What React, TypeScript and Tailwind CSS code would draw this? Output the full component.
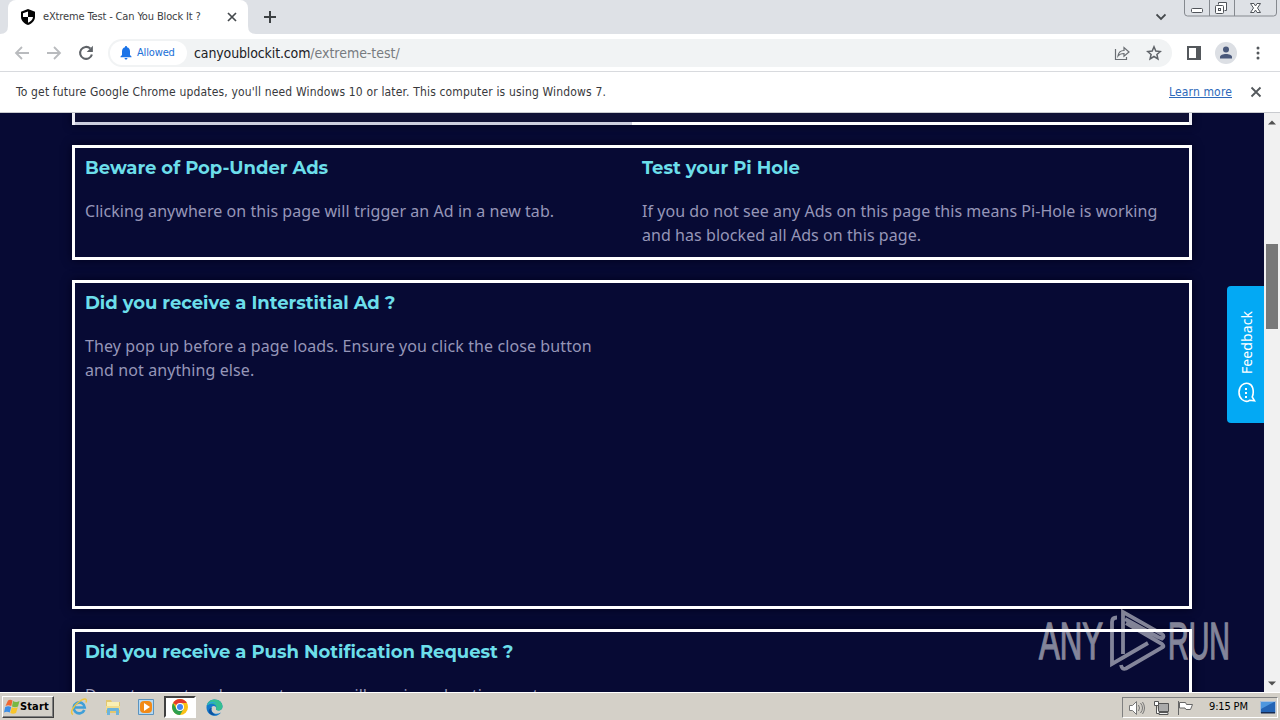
import type { ReactNode } from "react";

const UI_FONT = "font-['DejaVu_Sans_Condensed','DejaVu_Sans',sans-serif]";

function TabStrip() {
  return (
    <div className="relative flex h-[34px] shrink-0 items-start bg-[#dee1e6]">
      <svg className="self-end" width="8" height="8" viewBox="0 0 8 8" fill="#fff">
        <path d="M0 8Q8 8 8 0v8z" />
      </svg>
      <div className="relative flex h-[34px] w-[240px] items-center rounded-t-lg bg-white pl-3 pr-2.5">
        <ShieldIcon />
        <span className="ml-[7px] w-[162px] whitespace-nowrap pt-px text-[11px] tracking-[-0.14px] text-[#3c4043]">
          eXtreme Test - Can You Block It ?
        </span>
        <svg className="ml-auto" width="12" height="12" viewBox="0 0 12 12" stroke="#45494d" strokeWidth="1.7">
          <path d="M2 2l8 8M10 2l-8 8" />
        </svg>
      </div>
      <svg className="self-end" width="8" height="8" viewBox="0 0 8 8" fill="#fff">
        <path d="M0 0Q0 8 8 8H0z" />
      </svg>
      <svg className="ml-[7px] mt-2.5" width="14" height="14" viewBox="0 0 14 14" stroke="#3c4043" strokeWidth="2">
        <path d="M7 1v12M1 7h12" />
      </svg>
      <svg className="ml-auto mr-[18px] mt-[13px]" width="10" height="8" viewBox="0 0 10 8" fill="none" stroke="#45494d" strokeWidth="1.8">
        <path d="M.500 1.500L5 6l4.500-4.500" />
      </svg>
      <svg className="mr-[3px]" width="93" height="17" viewBox="0 0 93 17" fill="none" stroke="#85898f">
        <path d="M.5 0v13q0 3 3 3h86q3 0 3-3V0M25.500 0v16M50.500 0v16" />
        <g stroke="#50545a">
          <rect x="7.500" y="8.500" width="11" height="4" rx="1" fill="#fff" />
          <path d="M34.500 4.500v-2h8v8h-2" fill="#fff" />
          <rect x="31.500" y="5.500" width="8" height="8" rx="1" fill="#fff" />
          <rect x="34.500" y="8.500" width="2" height="2" />
          <path d="M66.500 3.500h3.500l1.500 2.500 1.500-2.500h3.500l-3 4.500 3 4.500h-3.500l-1.500-2.500-1.500 2.500h-3.500l3-4.500z" fill="#fff" />
        </g>
      </svg>
    </div>
  );
}

function ShieldIcon() {
  return (
    <svg width="16" height="18" viewBox="0 0 16 18">
      <path d="M8 1l7 2.700v5c0 4-3 6.800-7 8.300-4-1.500-7-4.300-7-8.300v-5z" fill="#050505" />
      <path d="M8 3.500V9H3V5.300zM8 9h5c-.3 2.800-2.400 4.600-5 5.700z" fill="#fff" />
    </svg>
  );
}

function Toolbar() {
  return (
    <div className="flex h-[38px] shrink-0 items-center border-b border-[#d8dade] bg-white pl-[14px]">
      <svg width="16" height="16" viewBox="0 0 16 16" fill="none" stroke="#b9bbbe" strokeWidth="1.800">
        <path d="M15 8H2M8 2L2 8l6 6" />
      </svg>
      <svg className="ml-4" width="16" height="16" viewBox="0 0 16 16" fill="none" stroke="#b9bbbe" strokeWidth="1.800">
        <path d="M1 8h13M8 2l6 6-6 6" />
      </svg>
      <svg className="ml-4" width="16" height="16" viewBox="0 0 16 16" fill="none" stroke="#5f6368" strokeWidth="2.100">
        <path d="M13.900 9.500A6 6 0 1 1 12.300 3.600" />
        <path d="M14.900 .7v6.200h-6.200z" fill="#5f6368" stroke="none" />
      </svg>
      <div className="ml-[14px] flex h-[28px] w-[1064px] items-center rounded-full bg-[#f1f3f4] pl-0.5">
        <div className="flex h-[24px] w-[77px] items-center rounded-full bg-white pl-2.5">
          <svg width="12" height="14" viewBox="0 0 12 14" fill="#1a73e8">
            <path d="M6 0c.8 0 1 .5 1 1.200 2 .5 3 2.200 3 4.300v3.500l1.500 1.500v.8H.500v-.8L2 9V5.500c0-2.100 1-3.800 3-4.300C5 .500 5.200 0 6 0zM4.600 12h2.800c0 2-2.800 2-2.800 0z" />
          </svg>
          <span className="ml-[5px] pt-px text-[11px] tracking-[-0.15px] text-[#2070d8]">Allowed</span>
        </div>
        <span className="ml-[7px] whitespace-nowrap pt-0.5 text-[14px] tracking-[-0.13px] text-[#202124]">
          canyoublockit.com<span className="tracking-[-0.03px] text-[#777b80]">/extreme-test/</span>
        </span>
        <svg className="ml-auto" width="16" height="16" viewBox="0 0 16 16" fill="none" stroke="#6a6e73" strokeWidth="1.200">
          <path d="M1.500 4v10.500h11V12M4 11c.5-4 3-5.500 6-5.500V2.500L15 7l-5 4.300V8.500C7.500 8.500 5.500 9 4 11z" />
        </svg>
        <svg className="ml-4 mr-2.5" width="16" height="16" viewBox="0 0 16 16" fill="none" stroke="#5f6368" strokeWidth="1.500">
          <path d="M8 1.800l1.800 4.300 4.500.4-3.400 3 1 4.400L8 11.500l-3.900 2.400 1-4.400-3.400-3 4.500-.4z" />
        </svg>
      </div>
      <svg className="ml-[15px]" width="14" height="14" viewBox="0 0 14 14">
        <rect x="1" y="1" width="12" height="12" fill="none" stroke="#54585c" strokeWidth="2" />
        <path d="M9 0h5v14H9z" fill="#54585c" />
      </svg>
      <svg className="ml-3.5" width="22" height="22" viewBox="0 0 22 22">
        <circle cx="11" cy="11" r="11" fill="#dcdfe4" />
        <circle cx="11" cy="7.500" r="3" fill="#49587a" />
        <path d="M5 16.500v-1.500c0-4 12-4 12 0v1.500z" fill="#49587a" />
      </svg>
      <svg className="ml-[19px]" width="4" height="14" viewBox="0 0 4 14" fill="#54585c">
        <circle cx="2" cy="2" r="1.500" />
        <circle cx="2" cy="7" r="1.500" />
        <circle cx="2" cy="12" r="1.500" />
      </svg>
    </div>
  );
}

function UpdateNotice() {
  return (
    <div className="flex h-[41px] shrink-0 items-center border-b border-[#c9cbcf] bg-white pl-4 pr-[18px] text-[12px]">
      <span className="whitespace-nowrap tracking-[0.16px] text-[#38393c]">
        To get future Google Chrome updates, you'll need Windows 10 or later. This computer is using Windows 7.
      </span>
      <span className="ml-auto whitespace-nowrap tracking-[0.15px] text-[#2d69ba] underline">Learn more</span>
      <svg className="ml-[18px]" width="12" height="12" viewBox="0 0 12 12" stroke="#54585c" strokeWidth="1.800">
        <path d="M1.500 1.500l9 9M10.500 1.500l-9 9" />
      </svg>
    </div>
  );
}

function Heading({ children }: { children: ReactNode }) {
  return (
    <h3 className="whitespace-nowrap font-['Montserrat','Open_Sans',sans-serif] text-[18px] font-bold leading-6 tracking-[-0.03px] text-[#6cdeea]">
      {children}
    </h3>
  );
}

function Panel({ children, size }: { children: ReactNode; size: string }) {
  return (
    <section className={`mb-5 flex shrink-0 border-[3px] border-white px-2.5 pt-2 shadow-[0_0_9px_#00001c] ${size}`}>
      {children}
    </section>
  );
}

function Copy({ children, spacing = "tracking-[0.055px]" }: { children: ReactNode; spacing?: string }) {
  return (
    <p className={`mt-[19px] whitespace-nowrap font-['Noto_Sans',sans-serif] text-[16px] leading-6 text-[#9696b8] ${spacing}`}>
      {children}
    </p>
  );
}

function PageContent() {
  return (
    <main className="relative flex h-[579px] shrink-0 overflow-hidden bg-[#070a34]">
      <div className="flex w-[1264px] flex-col px-[72px]">
        <div className="mb-5 flex h-[12px] shrink-0 border-x-[3px] border-[#eeeef5] bg-[#101136] shadow-[0_0_9px_#00001c]">
          <div className="w-[557px] border-b-[3px] border-[#cdcede]" />
          <div className="flex-1 border-b-[3px] border-white" />
        </div>
        <Panel size="h-[115px]">
          <div className="w-[557px]">
            <Heading>Beware of Pop-Under Ads</Heading>
            <Copy>Clicking anywhere on this page will trigger an Ad in a new tab.</Copy>
          </div>
          <div>
            <Heading>Test your Pi Hole</Heading>
            <Copy>
              If you do not see any Ads on this page this means Pi-Hole is working
              <br />
              and has blocked all Ads on this page.
            </Copy>
          </div>
        </Panel>
        <Panel size="h-[329px]">
          <div>
            <Heading>Did you receive a Interstitial Ad ?</Heading>
            <Copy spacing="tracking-[0.095px]">
              They pop up before a page loads. Ensure you click the close button
              <br />
              and not anything else.
            </Copy>
          </div>
        </Panel>
        <Panel size="h-[140px]">
          <div>
            <Heading>Did you receive a Push Notification Request ?</Heading>
            <Copy>Do not accept and request or you will receive advertisements</Copy>
          </div>
        </Panel>
      </div>
      <div className="flex w-4 flex-col items-center bg-[#f1f1f1]">
        <svg className="mt-[7px]" width="8" height="5" viewBox="0 0 8 5" fill="#505050"><path d="M0 4.500L4 .500l4 4z" /></svg>
        <div className="mt-[119px] h-[85px] w-[12px] bg-[#787878]" />
        <svg className="mb-[6px] mt-auto" width="8" height="5" viewBox="0 0 8 5" fill="#505050"><path d="M0 .500l4 4 4-4z" /></svg>
      </div>
      <button className="absolute right-4 top-[173px] flex h-[137px] w-[37px] flex-col items-center rounded-l-[4px] bg-[#03a9f4] pl-0.5 pt-[23px] text-white">
        <span className="h-[67px] rotate-180 font-['Noto_Sans',sans-serif] text-[14px] leading-5 tracking-[0.1px] [writing-mode:vertical-rl]">Feedback</span>
        <svg className="mt-1.5" width="19" height="22" viewBox="0 0 19 22" fill="none" stroke="#fff" strokeWidth="1.600">
          <path d="M12.500 18.300c-2 1.500-5 1.200-7.500-.8-4-3.500-4-11 0-14.500s9.500-1.500 10.700 3c.9 3.300.6 6.500-.5 9l2.300 3.800z" />
          <path d="M9 6v2M9 10v2M9 14v2" strokeWidth="2" />
        </svg>
      </button>
      <Watermark />
    </main>
  );
}

function Watermark() {
  return (
    <div className="absolute left-[1039px] top-[494px] flex h-[68px] w-[196px] items-center text-white opacity-50">
      <span className="w-[69px] origin-left scale-x-[0.61] whitespace-nowrap pt-px font-['Liberation_Sans',sans-serif] text-[51px] leading-[68px] [-webkit-text-stroke:1.3px_white]">ANY</span>
      <svg className="shrink-0" width="60" height="66" viewBox="0 0 60 66" fill="none" stroke="currentColor" strokeWidth="3.800">
        <path d="M9 9.500Q4 9.500 4 14V56L40 35M15 46V4l39 22q3 2 0 4.500L50 29 17 11M13 57q1 5 5 3.500L55 39q1-1-1-3L18 15" />
      </svg>
      <span className="origin-left scale-x-[0.56] whitespace-nowrap pt-px font-['Liberation_Sans',sans-serif] text-[51px] leading-[68px] [-webkit-text-stroke:1.3px_white]">RUN</span>
    </div>
  );
}

function WindowsFlag() {
  return (
    <svg width="16" height="16" viewBox="0 0 16 16">
      <path d="M4 1.500q2-1.500 4.500 0L7.300 7Q4 5.500 1.500 7z" fill="#ef6731" />
      <path d="M9 2q3 2 6.500 0l-1.500 5.500q-3 1.500-6 0z" fill="#78b843" />
      <path d="M1.200 8q3-1.500 6 0l-1.400 5.500q-3-1.500-5.800 0z" fill="#3c8ee6" />
      <path d="M7.800 8.300q3 1.500 6 0l-1.800 5.700q-3 1.500-5.700 0z" fill="#f8c52b" />
    </svg>
  );
}

function IeIcon() {
  return (
    <svg width="18" height="18" viewBox="0 0 18 18" fill="none">
      <path d="M14.300 12A5.500 5.500 0 1 1 14.700 9.500H4.500" stroke="#3f9fd8" strokeWidth="2.700" />
      <path d="M3 16.500C-1 15 4 7 10 3s7-1.500 6 1.500" stroke="#efc53d" strokeWidth="1.500" />
    </svg>
  );
}

function FolderIcon() {
  return (
    <svg width="18" height="18" viewBox="0 0 18 18">
      <path d="M2 2h5l1 2h8v11H2z" fill="#e3c76e" />
      <path d="M3 4h12v5H3z" fill="#fbf0b4" />
      <path d="M2 8h14v4H2z" fill="#f2dd8e" />
      <path d="M3 17v-6q0-1 1-1h10q1 0 1 1v6h-3v-4H6v4z" fill="#6cb4dc" />
    </svg>
  );
}

function MediaIcon() {
  return (
    <svg width="16" height="16" viewBox="0 0 16 16">
      <path d="M.500.500h15v15H.500z" fill="#b6d9f2" stroke="#5b93bf" />
      <rect x="2" y="2" width="12" height="12" rx="4" fill="#f28a17" />
      <path d="M6 4l6 4-6 4z" fill="#fff" />
    </svg>
  );
}

function ChromeIcon() {
  return (
    <svg width="16" height="16" viewBox="0 0 16 16">
      <circle cx="8" cy="8" r="8" fill="#fbc116" />
      <path d="M8 8L1.100 4A8 8 0 0 1 14.900 4H8z" fill="#e33b2e" />
      <path d="M1.100 4A8 8 0 0 0 8 16l3.500-6L8 8 4.500 10z" fill="#2da04e" />
      <circle cx="8" cy="8" r="4" fill="#fff" />
      <circle cx="8" cy="8" r="3" fill="#4285f4" />
    </svg>
  );
}

function EdgeIcon() {
  return (
    <svg width="17" height="17" viewBox="0 0 17 17">
      <path d="M.5 8.500C.5 3.500 4 .5 8.500.5c5 0 8 3.300 8 7 0 2.500-1.800 4-4 4-1.700 0-2.800-.6-2.500-1.400.7-1-.2-3-2.200-3-2.500 0-3.300 3-1.800 5.300 1.800 2.700 5.300 3.100 9 1.100-3 4.500-9 4-11.800 1.300C1.500 13 .5 11 .5 8.500z" fill="#1479cb" />
      <path d="M.8 6.500C2 2.500 5 .5 8.500.5c5 0 8 3.300 8 7 0 2.500-1.800 4-4 4-1.700 0-2.800-.6-2.500-1.400C12 6 6.500 2.500.8 6.500z" fill="#35bf91" />
      <path d="M.8 6.500C3 2 8 1.500 11 5c-3-2-7-1-10.200 1.500z" fill="#2aa7d8" />
      <path d="M6 8.500C4.500 11 6 15 10 16c-2.300.8-5 0-6.500-1.700C1.800 12 3 9.500 6 8.500z" fill="#0d529f" />
    </svg>
  );
}

function Tray() {
  return (
    <div className="ml-auto mr-0.5 mt-px flex h-[21px] w-[156px] items-center border border-b-white border-l-[#808080] border-r-white border-t-[#808080] pl-1.5">
      <svg width="17" height="16" viewBox="0 0 17 16" fill="none" stroke="#777">
        <path d="M.500 5.500h3l4-4v13l-4-4h-3z" fill="#fff" />
        <path d="M9.500 5q2 3 0 6M11.500 3q4 5 0 10M13.500 2q4 6 0 12" />
      </svg>
      <svg className="ml-[7px]" width="17" height="16" viewBox="0 0 17 16" fill="none" stroke="#555">
        <path d="M5.500 3.500h10v8h-10zM8 14.500h7M10.500 12v2" fill="#aaa" />
        <path d="M6 12.500h9v2H6z" fill="#eee" />
        <path d="M1.500 1.500h4v4h-4zM3.500 6v7.500H6" fill="#fff" />
      </svg>
      <svg className="ml-[7px]" width="17" height="16" viewBox="0 0 17 16" stroke="#666">
        <path d="M1.500 1v14" />
        <path d="M2.500 2.500h6l1 2h6l-2 5H9l-1-1.500H2.500z" fill="#fff" />
      </svg>
      <span className="ml-[15px] w-[41px] whitespace-nowrap text-[11px] tracking-[-0.15px] text-black">9:15 PM</span>
      <svg className="ml-[10px] shrink-0" width="16" height="13" viewBox="0 0 16 13">
        <path d="M.500.500h15v11H.500z" fill="#2464b5" stroke="#a8bfdc" />
        <path d="M1 1h13L1 8z" fill="#4e97df" />
        <path d="M1 11h14v1.500H1z" fill="#162b53" />
      </svg>
    </div>
  );
}

function Taskbar() {
  return (
    <footer className="flex h-[28px] shrink-0 border-t border-white bg-[#d4d0c8] pt-[3px]">
      <button className="ml-0.5 flex h-[22px] w-[52px] items-center border border-b-[#404040] border-l-white border-r-[#404040] border-t-white pl-px shadow-[inset_-1px_-1px_#808080]">
        <WindowsFlag />
        <span className="text-[11px] font-bold tracking-[0.12px] text-black">Start</span>
      </button>
      <div className="ml-4 flex h-[22px] items-center">
        <IeIcon />
        <div className="ml-4"><FolderIcon /></div>
        <div className="ml-4"><MediaIcon /></div>
        <div className="ml-2.5 flex h-[22px] w-8 items-center justify-center border-2 border-b-white border-l-[#404040] border-r-white border-t-[#404040] bg-white">
          <ChromeIcon />
        </div>
        <div className="ml-2.5"><EdgeIcon /></div>
      </div>
      <Tray />
    </footer>
  );
}

export default function App() {
  return (
    <div className={`flex h-[720px] w-[1280px] flex-col overflow-hidden ${UI_FONT}`}>
      <TabStrip />
      <Toolbar />
      <UpdateNotice />
      <PageContent />
      <Taskbar />
    </div>
  );
}
